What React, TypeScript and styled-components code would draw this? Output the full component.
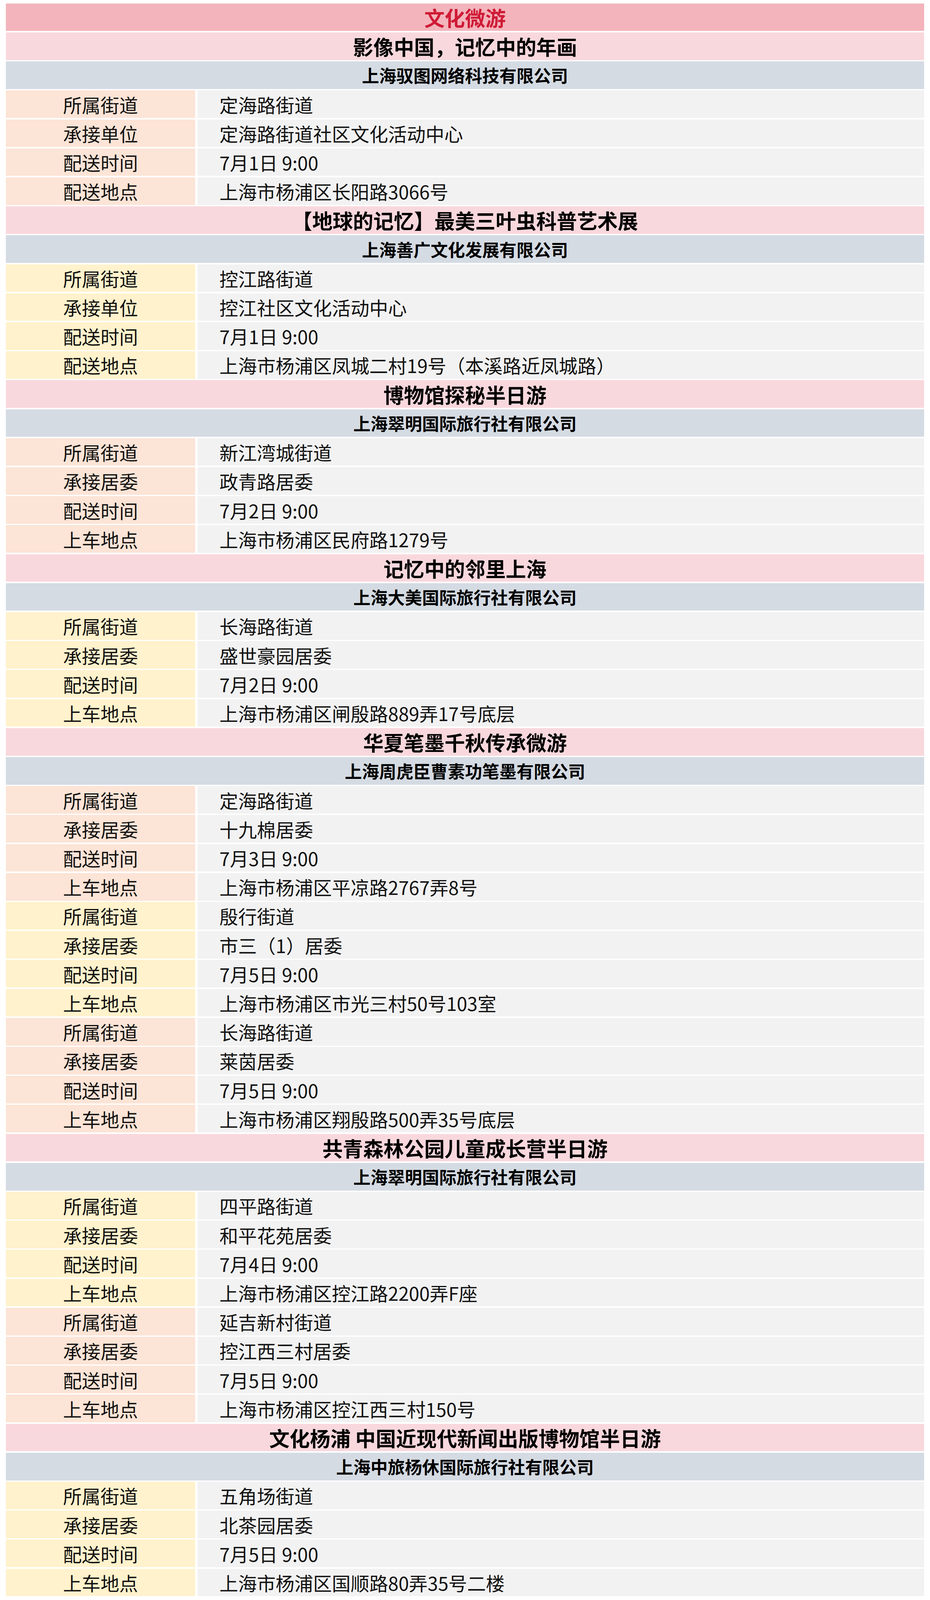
import styled, { createGlobalStyle } from "styled-components";

type Tone = "peach" | "yellow";
type Stop = { tone: Tone; rows: [string, string][] };
type Tour = { title: string; company: string; stops: Stop[] };

const stop = (tone: Tone, street: string, unitLabel: string, unit: string, time: string, placeLabel: string, place: string): Stop => ({
  tone,
  rows: [
    ["所属街道", street],
    [unitLabel, unit],
    ["配送时间", time],
    [placeLabel, place],
  ],
});

const tours: Tour[] = [
  {
    title: "影像中国，记忆中的年画",
    company: "上海驭图网络科技有限公司",
    stops: [stop("peach", "定海路街道", "承接单位", "定海路街道社区文化活动中心", "7月1日 9:00", "配送地点", "上海市杨浦区长阳路3066号")],
  },
  {
    title: "【地球的记忆】最美三叶虫科普艺术展",
    company: "上海善广文化发展有限公司",
    stops: [stop("yellow", "控江路街道", "承接单位", "控江社区文化活动中心", "7月1日 9:00", "配送地点", "上海市杨浦区凤城二村19号（本溪路近凤城路）")],
  },
  {
    title: "博物馆探秘半日游",
    company: "上海翠明国际旅行社有限公司",
    stops: [stop("peach", "新江湾城街道", "承接居委", "政青路居委", "7月2日 9:00", "上车地点", "上海市杨浦区民府路1279号")],
  },
  {
    title: "记忆中的邻里上海",
    company: "上海大美国际旅行社有限公司",
    stops: [stop("yellow", "长海路街道", "承接居委", "盛世豪园居委", "7月2日 9:00", "上车地点", "上海市杨浦区闸殷路889弄17号底层")],
  },
  {
    title: "华夏笔墨千秋传承微游",
    company: "上海周虎臣曹素功笔墨有限公司",
    stops: [
      stop("peach", "定海路街道", "承接居委", "十九棉居委", "7月3日 9:00", "上车地点", "上海市杨浦区平凉路2767弄8号"),
      stop("yellow", "殷行街道", "承接居委", "市三（1）居委", "7月5日 9:00", "上车地点", "上海市杨浦区市光三村50号103室"),
      stop("peach", "长海路街道", "承接居委", "莱茵居委", "7月5日 9:00", "上车地点", "上海市杨浦区翔殷路500弄35号底层"),
    ],
  },
  {
    title: "共青森林公园儿童成长营半日游",
    company: "上海翠明国际旅行社有限公司",
    stops: [
      stop("yellow", "四平路街道", "承接居委", "和平花苑居委", "7月4日 9:00", "上车地点", "上海市杨浦区控江路2200弄F座"),
      stop("peach", "延吉新村街道", "承接居委", "控江西三村居委", "7月5日 9:00", "上车地点", "上海市杨浦区控江西三村150号"),
    ],
  },
  {
    title: "文化杨浦 中国近现代新闻出版博物馆半日游",
    company: "上海中旅杨休国际旅行社有限公司",
    stops: [stop("yellow", "五角场街道", "承接居委", "北茶园居委", "7月5日 9:00", "上车地点", "上海市杨浦区国顺路80弄35号二楼")],
  },
];

// the sheet is drawn for a 7064px tall window: one unit = 1px there,
// so rows keep their share of the height when the window is shorter
const GlobalStyle = createGlobalStyle`
  :root {
    --u: calc(100vh / 7064);
  }
  html, body {
    margin: 0;
    padding: 0;
    background: #ffffff;
  }
  body {
    font-family: "Noto Sans CJK SC", "Noto Sans", "Liberation Sans", sans-serif;
    color: #111111;
  }
`;

const Sheet = styled.div`
  display: flex;
  flex-direction: column;
  gap: calc(var(--u) * 6);
  padding: calc(var(--u) * 15) 15px;
  background: #ffffff;
`;

const Band = styled.div<{ $bg: string; $size: number; $color?: string }>`
  height: calc(var(--u) * 122);
  display: flex;
  align-items: center;
  justify-content: center;
  background: ${(p) => p.$bg};
  color: ${(p) => p.$color || "#000000"};
  font-size: min(${(p) => p.$size}px, calc(var(--u) * 90));
  font-weight: 700;
  line-height: 1;
  white-space: nowrap;
`;

const Row = styled.div`
  height: calc(var(--u) * 122);
  display: grid;
  grid-template-columns: 485px 1fr;
  gap: 6px;
`;

const Label = styled.div<{ $tone: Tone }>`
  display: flex;
  align-items: center;
  justify-content: center;
  background: ${(p) => (p.$tone === "peach" ? "#fce4d6" : "#fff2cc")};
  font-size: 48px;
  line-height: 1;
`;

const Value = styled.div`
  display: flex;
  align-items: center;
  padding-left: 56px;
  background: #f2f2f2;
  font-size: 48px;
  line-height: 1;
  white-space: nowrap;
`;

export default function App() {
  return (
    <>
      <GlobalStyle />
      <Sheet>
        <Band $bg="#f3b4bb" $size={64} $color="#cf1b36">
          文化微游
        </Band>
        {tours.map((t) => (
          <TourBlock key={t.title + t.company} {...t} />
        ))}
      </Sheet>
    </>
  );
}

const TourBlock = ({ title, company, stops }: Tour) => (
  <>
    <Band $bg="#f9d8dd" $size={56}>
      {title}
    </Band>
    <Band $bg="#d5dbe3" $size={44}>
      {company}
    </Band>
    {stops.map((s, i) =>
      s.rows.map(([k, v]) => (
        <Row key={i + k}>
          <Label $tone={s.tone}>{k}</Label>
          <Value>{v}</Value>
        </Row>
      ))
    )}
  </>
);
